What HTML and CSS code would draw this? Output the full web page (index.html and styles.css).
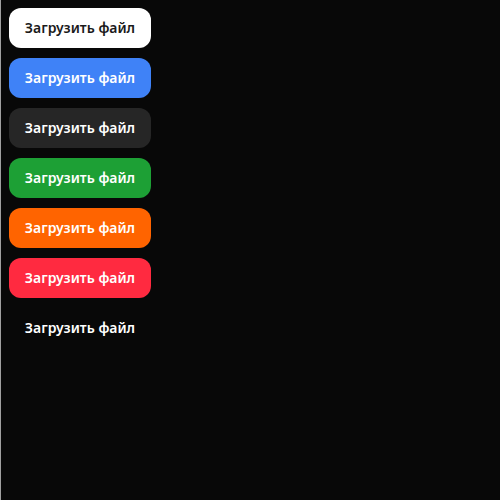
FILE: index.html
```html
<!DOCTYPE html>
<html lang="ru">
<head>
<meta charset="utf-8">
<link rel="stylesheet" href="styles.css">
</head>
<body>
<div class="stack">
  <button class="btn btn-white">Загрузить файл</button>
  <button class="btn btn-blue">Загрузить файл</button>
  <button class="btn btn-dark">Загрузить файл</button>
  <button class="btn btn-green">Загрузить файл</button>
  <button class="btn btn-orange">Загрузить файл</button>
  <button class="btn btn-red">Загрузить файл</button>
  <button class="btn btn-ghost">Загрузить файл</button>
</div>
</body>
</html>
```
FILE: styles.css
```css
html, body {
  margin: 0;
  padding: 0;
  height: 100%;
}
body {
  background: #080808;
  border-left: 1px solid #a0a0a0;
  box-sizing: border-box;
  padding: 8px 8px 8px 8px;
  font-family: "Noto Sans", sans-serif;
}
.stack {
  display: flex;
  flex-direction: column;
  align-items: flex-start;
  gap: 10px;
}
.btn {
  width: 142px;
  height: 40px;
  border: none;
  border-radius: 12px;
  font-family: "Noto Sans", sans-serif;
  font-size: 14px;
  font-weight: 600;
  padding: 0 0 2px 0;
  margin: 0;
  color: #ffffff;
}
.btn-white { background: #ffffff; color: #1a1a1a; }
.btn-blue { background: #3f82f7; }
.btn-dark { background: #262626; }
.btn-green { background: #1da035; }
.btn-orange { background: #ff6400; }
.btn-red { background: #ff2a40; }
.btn-ghost { background: transparent; }
```
